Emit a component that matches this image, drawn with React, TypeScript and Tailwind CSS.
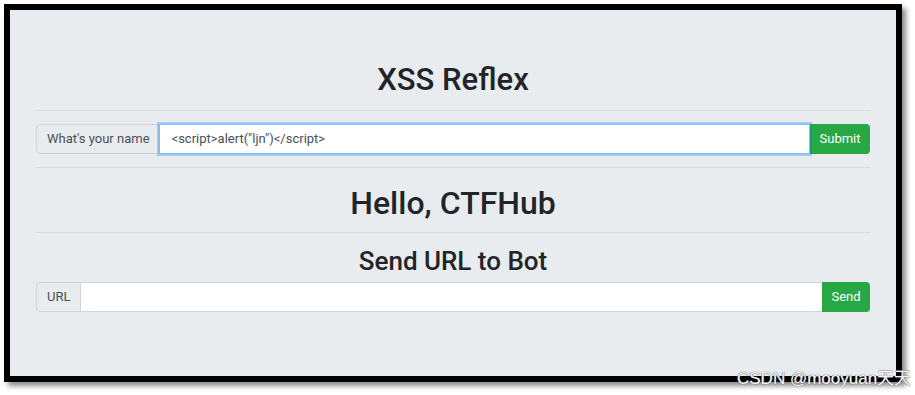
import React from 'react';

const font = { fontFamily: 'Roboto, "Noto Sans CJK SC", sans-serif' };

export default function App() {
  return (
    <div className="w-[915px] h-[395px] bg-white overflow-hidden pt-[4px] pl-[4px] relative" style={font}>
      {/* framed screenshot */}
      <div className="w-[898px] h-[378px] border-[6px] border-black bg-[#e9ecef] shadow-[4px_4px_5px_rgba(0,0,0,0.45)] px-[26px] pt-[50px]">
        <h1 className="text-center text-[31px] leading-[40px] font-medium text-[#212529]">XSS Reflex</h1>
        <div className="mt-[10px] border-t border-[#d8dce0]" />

        <div className="mt-[13px] flex h-[30px] text-[13px]">
          <span className="flex items-center pl-[10px] pr-[8px] bg-[#e9ecef] border border-[#ced4da] rounded-l-[4px] text-[#495057]">What's your name</span>
          <div className="relative z-10 flex-1 flex items-center bg-white border border-[#80bdff] shadow-[0_0_0_2px_rgba(0,123,255,0.3)] px-[12px] text-[#495057]">
            &lt;script&gt;alert("ljn")&lt;/script&gt;
          </div>
          <button className="w-[60px] bg-[#28a745] text-white rounded-r-[4px]">Submit</button>
        </div>

        <div className="mt-[13px] border-t border-[#d8dce0]" />
        <h2 className="mt-[15px] text-center text-[32px] leading-[40px] font-medium text-[#212529]">Hello, CTFHub</h2>
        <div className="mt-[9px] border-t border-[#d8dce0]" />
        <h3 className="mt-[13px] text-center text-[26px] leading-[30px] font-medium text-[#212529]">Send URL to Bot</h3>

        <div className="mt-[6px] flex h-[30px] text-[13px]">
          <span className="flex items-center px-[10px] bg-[#e9ecef] border border-[#ced4da] rounded-l-[4px] text-[#495057]">URL</span>
          <div className="flex-1 bg-white border-y border-[#ced4da]" />
          <button className="w-[48px] bg-[#28a745] text-white rounded-r-[4px]">Send</button>
        </div>
      </div>

      {/* watermark */}
      <span className="absolute left-[737px] top-[369px] text-[17px] leading-[20px] text-[#f2f2f2] [text-shadow:0_0_1px_#666,0_0_1px_#666] whitespace-nowrap" style={{ fontFamily: '"Liberation Sans", "Noto Sans CJK SC", sans-serif' }}>
        CSDN @mooyuan天天
      </span>
    </div>
  );
}
